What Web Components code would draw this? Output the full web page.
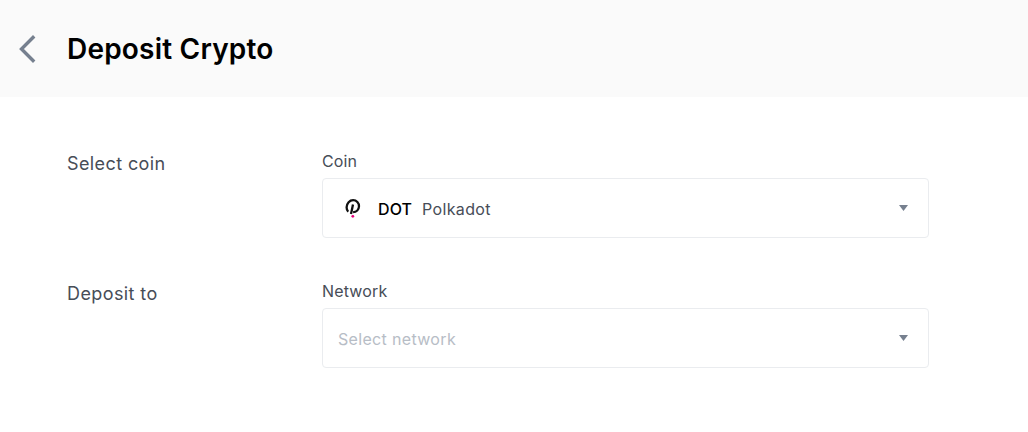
<!DOCTYPE html>
<html lang="en"><head><meta charset="utf-8"><title>Deposit Crypto</title>
<style>html,body{margin:0;padding:0;background:#fff}body{font-family:Inter,"Liberation Sans",sans-serif}</style>
</head><body>
<deposit-page>
  <page-header slot="header" title="Deposit Crypto"></page-header>
  <form-row label="Select coin" field="Coin">
    <select-box>
      <coin-icon></coin-icon>
      <span style="color:#000;font-weight:500;margin:2px 0 0 16px;letter-spacing:.1px">DOT</span>
      <span style="color:#474d57;margin:2px 0 0 10px;letter-spacing:.35px">Polkadot</span>
    </select-box>
  </form-row>
  <form-row label="Deposit to" field="Network">
    <select-box><span style="color:#b7bdc6;margin-top:2px;letter-spacing:.33px">Select network</span></select-box>
  </form-row>
</deposit-page>
<script>
const def=(n,html,init)=>customElements.define(n,class extends HTMLElement{
  constructor(){super();this.attachShadow({mode:'open'}).innerHTML=html;}
  connectedCallback(){init&&init(this,this.shadowRoot);}
});
def('deposit-page',`<style>:host{display:block;width:1028px;height:432px;overflow:hidden;background:#fff}
.body{display:flex;flex-direction:column;gap:20px;padding:53px 99px 0 67px}</style>
<slot name="header"></slot><div class="body"><slot></slot></div>`);
def('page-header',`<style>:host{display:flex;align-items:center;height:97px;background:#fafafa;padding-left:18px;box-sizing:border-box}
svg{width:18px;height:28px;display:block;flex:none}
h1{margin:0 0 0 31px;font:600 28px/36px Inter,"Liberation Sans",sans-serif;color:#000;letter-spacing:.2px}</style>
<svg viewBox="0 0 18 28" fill="none"><path d="M15 2.500 3.500 14 15 25.500" stroke="#76808f" stroke-width="3.400" stroke-linecap="square"/></svg><h1></h1>`,
(e,s)=>{s.querySelector('h1').textContent=e.getAttribute('title')});
def('form-row',`<style>:host{display:grid;grid-template-columns:255px 607px;height:110px;font-family:Inter,"Liberation Sans",sans-serif}
.l{font-size:18px;line-height:28px;color:#474d57;letter-spacing:.4px}
.f{font-size:16px;line-height:22px;color:#474d57;letter-spacing:.15px;margin-bottom:6px}
</style><div class="l"></div><div><div class="f"></div><slot></slot></div>`,
(e,s)=>{s.querySelector('.l').textContent=e.getAttribute('label');s.querySelector('.f').textContent=e.getAttribute('field')});
def('select-box',`<style>:host{display:flex;align-items:center;height:60px;box-sizing:border-box;border:1px solid #eaecef;border-radius:4px;padding:0 15px;font-size:16px;background:#fff}
.c{flex:1;display:flex;align-items:center;min-width:0}
svg{width:9px;height:6px;flex:none;margin-right:5.500px;display:block}</style>
<div class="c"><slot></slot></div><svg viewBox="0 0 9 6"><path d="M0 0h9L4.500 6z" fill="#76808f"/></svg>`);
def('coin-icon',`<style>:host{display:block;width:24px;height:24px;flex:none}svg{display:block}</style>
<svg width="24" height="24" viewBox="0 0 24 24" fill="none"><path d="M10.200 15.800C9 14.600 8.600 13.100 8.600 11.200 8.800 7.200 11.600 4.100 15.100 4.100c3.400 0 6 2.800 5.900 6.200-.1 3.300-2.600 5.800-5.900 5.800" stroke="#111" stroke-width="2.300"/><path d="M15 8.500 13 18" stroke="#111" stroke-width="2.300"/><circle cx="14.800" cy="20.300" r="1.400" fill="#e6007a"/></svg>`);
</script></body></html>
